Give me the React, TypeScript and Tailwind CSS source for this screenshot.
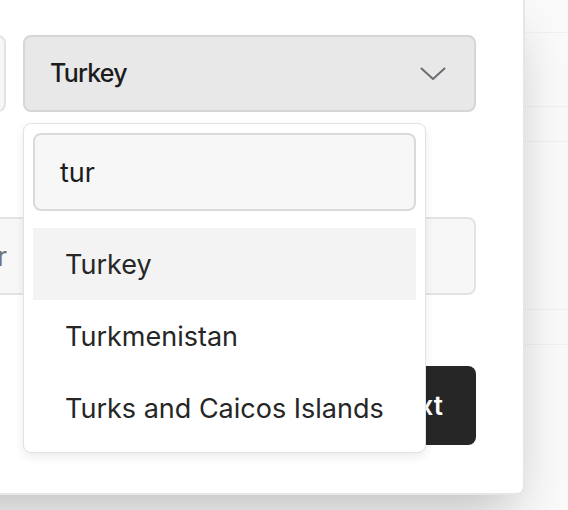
import React from 'react';

const options = ['Turkey', 'Turkmenistan', 'Turks and Caicos Islands'];

const Chevron = () => (
    <svg width="26" height="14" viewBox="0 0 26 14" fill="none" className="shrink-0">
        <path d="M1.5 1.5 L13 12 L24.5 1.5" stroke="#6b6b73" strokeWidth="2" strokeLinecap="round" strokeLinejoin="round" />
    </svg>
);

export default function App() {
    return (
        <div className="flex w-[568px] h-[510px] overflow-hidden bg-[#fafafa] text-[#1c1c1c]" style={{ fontFamily: 'Inter, "Noto Sans", sans-serif' }}>
            <div className="shrink-0 self-start w-[665px] h-[495px] ml-[-140px] bg-white border-r-2 border-b-2 border-[#e6e6e6] rounded-br-lg shadow-[0_25px_50px_-12px_rgba(0,0,0,0.25)] pl-[40px] pr-[47px] pt-[35px] relative z-10">
                <div className="grid grid-cols-[106px_453px] gap-[17px]">
                    <div className="h-[77px] bg-[#f7f7f7] border-2 border-[#e3e3e3] rounded-lg" />
                    <div className="relative">
                        <button className="w-full h-[77px] flex items-center justify-between pl-[25px] pr-[28px] bg-[#e8e8e8] border-2 border-[#d6d6d6] rounded-lg">
                            <span className="text-[25px] font-medium tracking-[-0.8px] pt-[1px]">Turkey</span>
                            <Chevron />
                        </button>
                        <div className="absolute top-[88px] left-0 w-[403px] z-20 bg-white border border-[#e2e2e2] rounded-lg shadow-[0_4px_10px_rgba(0,0,0,0.08)] pt-[9px] px-[9px] pb-[8px]">
                            <div className="h-[78px] flex items-center bg-[#f7f7f7] border-2 border-[#dadada] rounded-lg pl-[25px] pt-[2px] text-[27px]">tur</div>
                            <div className="mt-[17px] flex flex-col">
                                {options.map((o, i) => (
                                    <div key={o} className={`h-[72px] flex items-center pl-[32px] pt-[2px] text-[27px] text-[#262626] ${i === 0 ? 'bg-[#f3f3f3]' : ''}`}>
                                        {o}
                                    </div>
                                ))}
                            </div>
                        </div>
                    </div>
                </div>

                <div className="mt-[105px] h-[78px] flex items-center bg-[#f7f7f7] border-2 border-[#e3e3e3] rounded-lg">
                    <div className="w-[105px] shrink-0 text-right whitespace-nowrap overflow-hidden text-[26px] text-[#71717a]">Number</div>
                </div>

                <div className="mt-[71px] flex justify-end">
                    <button className="h-[79px] px-[33px] bg-[#262626] text-white rounded-lg text-[26px] font-semibold">Next</button>
                </div>
            </div>

            <div className="flex-1 flex flex-col">
                <div className="h-[33px] border-b border-[#f1f1f1]" />
                <div className="h-[74px] border-b border-[#f1f1f1]" />
                <div className="h-[35px] border-b border-[#f1f1f1]" />
                <div className="h-[168px] border-b border-[#f1f1f1]" />
                <div className="h-[35px] border-b border-[#f1f1f1]" />
            </div>
        </div>
    );
}
